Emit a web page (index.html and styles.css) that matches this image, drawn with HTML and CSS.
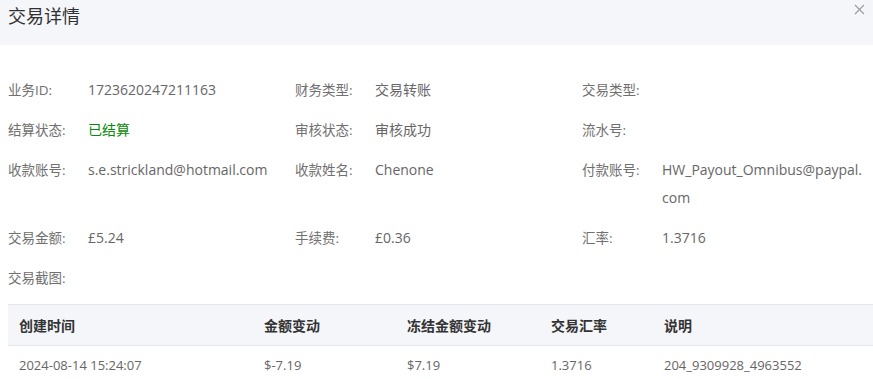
FILE: index.html
```html
<!DOCTYPE html>
<html lang="zh-CN">
<head>
  <meta charset="UTF-8" />
  <meta name="viewport" content="width=device-width, initial-scale=1.0" />
  <title>交易详情</title>
  <link rel="stylesheet" href="styles.css">
</head>
<body>
  <div class="dialog-header">
    <span class="dialog-title">交易详情</span>
    <span class="dialog-close">
      <svg width="11" height="11" viewBox="0 0 11 11"><path d="M1 1L10 10M10 1L1 10" stroke="#9a9ea8" stroke-width="1.2" fill="none"/></svg>
    </span>
  </div>

  <div class="dialog-body">
    <div class="info-grid">
      <div class="info-item"><span class="info-label">业务ID:</span><span class="info-value">1723620247211163</span></div>
      <div class="info-item"><span class="info-label">财务类型:</span><span class="info-value">交易转账</span></div>
      <div class="info-item"><span class="info-label">交易类型:</span><span class="info-value"></span></div>

      <div class="info-item"><span class="info-label">结算状态:</span><span class="info-value success">已结算</span></div>
      <div class="info-item"><span class="info-label">审核状态:</span><span class="info-value">审核成功</span></div>
      <div class="info-item"><span class="info-label">流水号:</span><span class="info-value"></span></div>

      <div class="info-item"><span class="info-label">收款账号:</span><span class="info-value">s.e.strickland@hotmail.com</span></div>
      <div class="info-item"><span class="info-label">收款姓名:</span><span class="info-value">Chenone</span></div>
      <div class="info-item"><span class="info-label">付款账号:</span><span class="info-value">HW_Payout_Omnibus@paypal.<wbr>com</span></div>

      <div class="info-item"><span class="info-label">交易金额:</span><span class="info-value">£5.24</span></div>
      <div class="info-item"><span class="info-label">手续费:</span><span class="info-value">£0.36</span></div>
      <div class="info-item"><span class="info-label">汇率:</span><span class="info-value">1.3716</span></div>

      <div class="info-item"><span class="info-label">交易截图:</span><span class="info-value"></span></div>
    </div>

    <table class="flow-table">
      <colgroup>
        <col style="width: 245px">
        <col style="width: 143px">
        <col style="width: 144px">
        <col style="width: 113px">
        <col>
      </colgroup>
      <thead>
        <tr>
          <th>创建时间</th>
          <th>金额变动</th>
          <th>冻结金额变动</th>
          <th>交易汇率</th>
          <th>说明</th>
        </tr>
      </thead>
      <tbody>
        <tr>
          <td>2024-08-14 15:24:07</td>
          <td>$-7.19</td>
          <td>$7.19</td>
          <td>1.3716</td>
          <td>204_9309928_4963552</td>
        </tr>
      </tbody>
    </table>
  </div>
</body>
</html>
```

FILE: styles.css
```css
body {
  margin: 0;
  font-family: "Open Sans", "Noto Sans CJK SC", sans-serif;
  color: #666;
  background: #fff;
  overflow: hidden;
}

.dialog-header {
  display: flex;
  justify-content: space-between;
  align-items: flex-start;
  height: 45px;
  padding: 3px 8px 0 8px;
  box-sizing: border-box;
  background-color: #f5f6fa;
}

.dialog-title {
  font-size: 18px;
  line-height: 26px;
  color: #303133;
}

.dialog-close {
  display: flex;
  padding-top: 1px;
}

.dialog-body {
  padding: 31px 0 0 8px;
}

.info-grid {
  display: grid;
  grid-template-columns: 287px 287px 287px;
  row-gap: 12px;
}

.info-item {
  display: flex;
  font-size: 14px;
  line-height: 28px;
}

.info-label {
  flex: 0 0 80px;
  font-size: 13.5px;
  color: #707070;
}

.info-value {
  flex: 1;
  min-width: 0;
  color: #666;
  overflow-wrap: break-word;
}

.success {
  color: #0a8a0a;
}

.flow-table {
  width: 865px;
  margin-top: 12px;
  border-collapse: collapse;
  table-layout: fixed;
  font-size: 13px;
}

.flow-table th {
  height: 40px;
  padding: 0 11px;
  text-align: left;
  font-size: 14px;
  font-weight: 600;
  color: #333;
  background-color: #f5f6fa;
  border-top: 1px solid #e4e6ee;
  border-bottom: 1px solid #e4e6ee;
}

.flow-table td {
  height: 37px;
  padding: 0 11px;
  color: #666;
  border-bottom: 1px solid #ebeef5;
}
```
